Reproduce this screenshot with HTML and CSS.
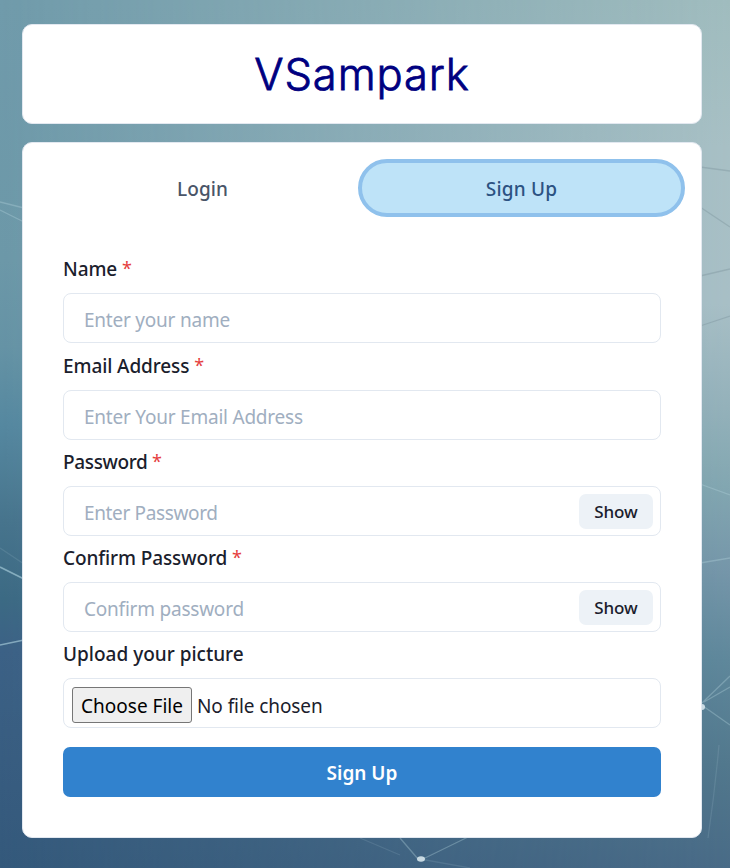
FILE: index.html
```html
<!DOCTYPE html>
<html lang="en">
<head>
<meta charset="utf-8">
<title>VSampark</title>
<link rel="stylesheet" href="styles.css">
</head>
<body>
<svg class="backdrop" viewBox="0 0 730 868" preserveAspectRatio="none" aria-hidden="true">
  <defs>
    <linearGradient id="left" x1="0" y1="0" x2="0" y2="1">
      <stop offset="0" stop-color="#709bab"/><stop offset=".3" stop-color="#6c98a8"/><stop offset=".4" stop-color="#6593a5"/><stop offset=".49" stop-color="#5588a0"/><stop offset=".6" stop-color="#47748d"/><stop offset=".69" stop-color="#3c6a84"/><stop offset=".75" stop-color="#3c6186"/><stop offset="1" stop-color="#34597b"/>
    </linearGradient>
    <linearGradient id="right" x1="0" y1="0" x2="0" y2="1">
      <stop offset="0" stop-color="#a0bcbe"/><stop offset=".17" stop-color="#a8c0c5"/><stop offset=".35" stop-color="#a8bfc6"/><stop offset=".47" stop-color="#94b1ba"/><stop offset=".56" stop-color="#83a7b1"/><stop offset=".66" stop-color="#7596a9"/><stop offset=".76" stop-color="#5f889b"/><stop offset=".88" stop-color="#52788d"/><stop offset="1" stop-color="#496b87"/>
    </linearGradient>
    <linearGradient id="fade"><stop offset="0" stop-color="#000"/><stop offset="1" stop-color="#fff"/></linearGradient>
    <mask id="across"><rect width="730" height="868" fill="url(#fade)"/></mask>
  </defs>
  <rect width="730" height="868" fill="url(#left)"/>
  <rect width="730" height="868" fill="url(#right)" mask="url(#across)"/>
  <g fill="none" stroke="#6d858e" stroke-opacity=".3" stroke-width="1.3">
    <path d="M700 167L730 171M700 207L730 227M700 276L730 269M700 326L730 316"/>
  </g>
  <g fill="none" stroke="#b4d3dc" stroke-opacity=".35" stroke-width="1.3">
    <path d="M0 202L24 208M0 210L24 222M700 484L730 495M700 563L730 558M703 706L730 725M702 703L730 676M704 702L730 687"/>
    <path d="M0 548L24 564M360 838L400 855M420 859L470 868" stroke-opacity=".15"/>
    <path d="M400 838L418 859M423 859L468 837"/>
    <path d="M719 745Q715 790 708 838" stroke-opacity=".15"/>
  </g>
  <g fill="none" stroke="#a9cedc" stroke-opacity=".65" stroke-width="1.6"><path d="M0 567L24 579M0 645L24 640"/></g>
  <g fill="#d6e5ec" fill-opacity=".9"><circle cx="702" cy="707" r="3"/><ellipse cx="421" cy="859" rx="4" ry="2.7"/></g>
</svg>
<main class="page">
  <header class="card brand"><h1>VSampark</h1></header>
  <section class="card panel">
    <nav class="tabs">
      <button class="tab">Login</button>
      <button class="tab active">Sign Up</button>
    </nav>
    <form class="form">
      <div class="field first">
        <label for="name">Name <span class="star">*</span></label>
        <div class="control"><input id="name" type="text" placeholder="Enter your name"></div>
      </div>
      <div class="field">
        <label for="email">Email Address <span class="star">*</span></label>
        <div class="control"><input id="email" type="text" placeholder="Enter Your Email Address"></div>
      </div>
      <div class="field">
        <label for="pw" class="snug">Password <span class="star">*</span></label>
        <div class="control snug"><input id="pw" type="password" placeholder="Enter Password"><button type="button" class="show">Show</button></div>
      </div>
      <div class="field">
        <label for="cpw">Confirm Password <span class="star">*</span></label>
        <div class="control"><input id="cpw" type="password" placeholder="Confirm password"><button type="button" class="show">Show</button></div>
      </div>
      <div class="field">
        <label for="pic" class="wide">Upload your picture</label>
        <div class="control file"><span class="choose">Choose File</span><span class="chosen">No file chosen</span></div>
      </div>
      <button type="button" class="submit">Sign Up</button>
    </form>
  </section>
</main>
</body>
</html>
```
FILE: styles.css
```css
* { box-sizing: border-box; }
body {
  margin: 0;
  height: 868px;
  overflow: hidden;
  font: 400 19px/29px "Noto Sans", "Open Sans", sans-serif;
  letter-spacing: -0.22px;
  color: #1a202c;
}
button, input { font: inherit; letter-spacing: inherit; color: inherit; border: 0; padding: 0; }
.backdrop { position: absolute; inset: 0; width: 730px; height: 868px; z-index: -1; }
.page { padding: 24px 28px 0 22px; display: flex; flex-direction: column; gap: 18px; }
.card { background: #fff; border: 1px solid #e2e8f0; border-radius: 10px; }
.brand { height: 100px; display: flex; align-items: center; justify-content: center; }
.brand h1 { margin: 0; font: 300 43.5px/60px Inter, "Liberation Sans", sans-serif; letter-spacing: 0.9px; color: #000080; -webkit-text-stroke: .8px #000080; }
.panel { height: 696px; padding: 16px 16px 0; }
.tabs { display: flex; height: 58px; }
.tab { flex: 1; border-radius: 29px; background: none; color: #4a5568; font-weight: 500; letter-spacing: 0.1px; padding: 2px 0 0 8px; }
.active { background: #bee3f8; color: #2c5282; border: 4px solid #8fc1ec; flex: 0 0 327px; letter-spacing: 0.2px; padding-left: 0; }
.form { padding: 38px 24px 0; }
.field { display: flex; flex-direction: column; gap: 9px; height: 96px; }
.first { height: 97px; }
label { font-weight: 500; letter-spacing: -0.1px; }
.star { color: #e53e3e; font-weight: 400; font-size: 18px; letter-spacing: 0; line-height: 1; vertical-align: 1px; }
.snug { letter-spacing: -0.35px; }
.wide { letter-spacing: 0; }
.control { height: 50px; border: 1px solid #e2e8f0; border-radius: 8px; display: flex; align-items: center; padding: 4px 7px 0 20px; }
.control input { flex: 1; min-width: 0; background: none; outline: 0; height: 29px; }
.control input::placeholder { color: #a0aec0; opacity: 1; }
.show { width: 74px; height: 35px; margin-top: -4px; border-radius: 7px; background: #edf2f7; font-size: 17px; font-weight: 500; letter-spacing: -0.1px; }
.file { padding: 3px 8px 0; letter-spacing: -0.08px; }
.chosen { padding-top: 3px; }
.choose { width: 120px; height: 36px; line-height: 36px; border: 1px solid #767676; border-radius: 3px; background: #efefef; color: #000; text-align: center; margin-right: 5px; letter-spacing: 0; }
.submit { display: block; width: 100%; height: 50px; margin-top: 11px; padding-top: 2px; border-radius: 7px; background: #3182ce; color: #fff; font-weight: 600; letter-spacing: 0; }
```
